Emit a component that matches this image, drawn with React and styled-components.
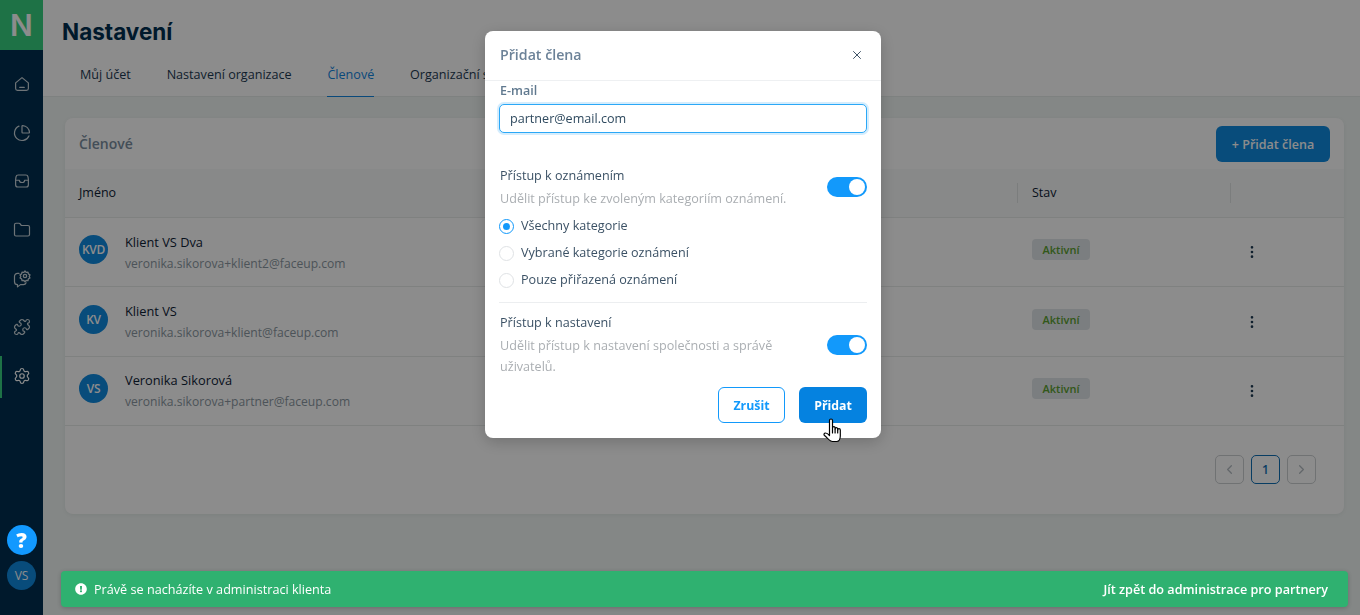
import styled, { createGlobalStyle } from "styled-components";
import { ChartPie, Folder, Puzzle, Settings, X, ChevronLeft, ChevronRight, EllipsisVertical } from "lucide-react";
import { FaExclamationCircle } from "react-icons/fa";

const GlobalStyle = createGlobalStyle`
  html, body { margin: 0; height: 100%; overflow: hidden; }
  body { font-family: "Open Sans", "Liberation Sans", sans-serif; background: #f0f6f4; color: #1d3a52; }
  * { box-sizing: border-box; }
`;

const Layout = styled.div`
  display: flex;
  height: 100vh;
`;

// sidebar
const Sidebar = styled.nav`
  width: 43px;
  flex-shrink: 0;
  background: #002f50;
  display: flex;
  flex-direction: column;
  align-items: center;
`;

const Logo = styled.div`
  width: 100%;
  height: 50px;
  background: #37cf80;
  color: #fff;
  font-family: Inter, sans-serif;
  font-weight: 600;
  font-size: 30px;
  display: flex;
  align-items: center;
  justify-content: center;
  margin-bottom: 10px;
`;

const NavItem = styled.div`
  position: relative;
  width: 100%;
  height: 48.6px;
  display: flex;
  align-items: center;
  justify-content: center;
  color: ${(p) => (p.$active ? "#fff" : "#c9d3da")};
  svg { width: 18px; height: 18px; }
  &::before {
    content: "";
    display: ${(p) => (p.$active ? "block" : "none")};
    position: absolute;
    left: 0;
    top: 4px;
    width: 2px;
    height: 42px;
    background: #37cf80;
  }
`;

const SideBottom = styled.div`
  margin-top: auto;
  padding-bottom: 25px;
  display: flex;
  flex-direction: column;
  align-items: center;
  gap: 6px;
`;

const HelpButton = styled.div`
  position: relative;
  z-index: 20;
  width: 30px;
  height: 30px;
  border-radius: 50%;
  background: #1299ff;
  color: #fff;
  font-weight: 800;
  font-size: 21px;
  line-height: 30px;
  text-align: center;
`;

const UserBadge = styled.div`
  width: 29px;
  height: 29px;
  border-radius: 50%;
  background: #0f8ae0;
  color: #fff;
  font-size: 12px;
  line-height: 29px;
  text-align: center;
`;

// main part
const Main = styled.main`
  flex: 1;
  min-width: 0;
  display: flex;
  flex-direction: column;
`;

const Header = styled.header`
  height: 97px;
  background: #fff;
  border-bottom: 1px solid #e6ecea;
  padding: 18px 0 0 19px;
`;

const Title = styled.h1`
  margin: 0;
  font-family: Inter, sans-serif;
  font-size: 22.5px;
  line-height: 28px;
  font-weight: 700;
  color: #002f50;
`;

const Tabs = styled.div`
  display: flex;
  gap: 35.8px;
  padding: 12px 0 0 18px;
`;

const Tab = styled.div`
  height: 39px;
  font-size: 12.6px;
  line-height: 34px;
  white-space: nowrap;
  color: ${(p) => (p.$active ? "#1185e0" : "#1d3a52")};
  border-bottom: ${(p) => (p.$active ? "1px solid #1185e0" : "none")};
`;

const Content = styled.div`
  flex: 1;
  padding: 21px 16px 0 22px;
`;

const Card = styled.section`
  height: 396px;
  background: #fff;
  border-radius: 8px;
  box-shadow: 0 1px 4px rgba(0, 0, 0, 0.06);
  display: flex;
  flex-direction: column;
`;

const CardHead = styled.div`
  height: 51px;
  flex-shrink: 0;
  padding: 8px 14px 7px;
  display: flex;
  align-items: center;
  justify-content: space-between;
`;

const CardTitle = styled.h2`
  margin: 0 0 1px;
  font-size: 14px;
  font-weight: 600;
  color: #7b8ea0;
`;

const PrimaryButton = styled.button`
  height: 36px;
  width: 114px;
  border: none;
  border-radius: 6px;
  background: #0f8ae0;
  color: #fff;
  font: 600 12.5px "Open Sans", sans-serif;
`;

const TableRow = styled.div`
  display: grid;
  grid-template-columns: 952px 213px 1fr;
  align-items: center;
  flex-shrink: 0;
  height: ${(p) => (p.$head ? "49px" : "69.4px")};
  background: ${(p) => (p.$head ? "#f8f9f9" : "transparent")};
  border-bottom: 1px solid #e8ebea;
`;

const HeadCell = styled.div`
  font-size: 12.5px;
  color: #0e2236;
  padding-left: 14px;
  height: 20px;
  line-height: 20px;
  border-left: ${(p) => (p.$divider ? "1px solid #e0e4e3" : "none")};
`;

const MemberCell = styled.div`
  display: flex;
  align-items: center;
  gap: 17px;
  padding-left: 14px;
`;

const Avatar = styled.div`
  width: 29px;
  height: 29px;
  margin-bottom: 5px;
  border-radius: 50%;
  background: #0f8ae0;
  color: #fff;
  font-size: 12px;
  font-weight: 600;
  letter-spacing: -0.3px;
  line-height: 29px;
  text-align: center;
`;

const MemberText = styled.div`
  padding-top: 2px;
`;

const MemberName = styled.div`
  font-size: 12.8px;
  font-weight: 500;
  line-height: 18px;
  color: #0e2236;
`;

const MemberMail = styled.div`
  margin-top: 2px;
  font-size: 12.1px;
  line-height: 21px;
  color: #8b98a2;
`;

const StatusCell = styled.div`
  padding: 0 0 5px 15px;
`;

const StatusBadge = styled.span`
  display: block;
  width: 58px;
  height: 21px;
  border-radius: 4px;
  background: #e1e6e9;
  color: #5aa030;
  font-size: 11px;
  font-weight: 600;
  line-height: 22px;
  text-align: center;
`;

const MenuCell = styled.div`
  padding-left: 14px;
  color: #1d3a52;
  display: flex;
  svg { width: 16px; height: 16px; }
`;

const Pagination = styled.div`
  display: flex;
  justify-content: flex-end;
  gap: 7px;
  padding: 29px 28px 0 0;
`;

const PageButton = styled.div`
  width: 29px;
  height: 29px;
  border-radius: 5px;
  border: 1px solid ${(p) => (p.$active ? "#0f6fb5" : "#ccd0d2")};
  color: ${(p) => (p.$active ? "#0f6fb5" : "#b4bcc2")};
  font-size: 12px;
  font-weight: 600;
  display: flex;
  align-items: center;
  justify-content: center;
  svg { width: 15px; height: 15px; }
`;

const Banner = styled.div`
  position: relative;
  z-index: 20;
  height: 36px;
  margin: 0 12px 8px 18px;
  padding: 0 20px 1px 14px;
  background: #2fb170;
  border-radius: 4px;
  color: #fff;
  font-size: 12.65px;
  display: flex;
  align-items: center;
  justify-content: space-between;
  box-shadow: 0 1px 4px rgba(0, 0, 0, 0.2);
`;

const BannerText = styled.div`
  display: flex;
  align-items: center;
  gap: 7px;
  svg { width: 12px; height: 12px; }
`;

const BannerLink = styled.span`
  font-weight: 600;
`;

// modal
const Overlay = styled.div`
  position: fixed;
  inset: 0;
  z-index: 10;
  background: rgba(0, 0, 0, 0.45);
  display: flex;
  justify-content: center;
  align-items: flex-start;
  padding: 31px 0 0 6px;
`;

const Modal = styled.div`
  width: 396px;
  height: 407px;
  background: #fff;
  border-radius: 8px;
  box-shadow: 0 4px 16px rgba(0, 0, 0, 0.2);
  display: flex;
  flex-direction: column;
`;

const ModalHead = styled.div`
  height: 50px;
  flex-shrink: 0;
  padding: 0 17px 2px 15px;
  border-bottom: 1px solid #eef0f2;
  display: flex;
  align-items: center;
  justify-content: space-between;
  svg { width: 14px; height: 14px; color: #33475b; }
`;

const ModalTitle = styled.div`
  font-size: 14.2px;
  font-weight: 600;
  color: #6c8298;
`;

const ModalBody = styled.div`
  padding: 0 14px;
`;

const FieldLabel = styled.div`
  font-size: 12.5px;
  font-weight: 600;
  line-height: 19px;
  padding-left: 1px;
  color: #60798f;
`;

const EmailInput = styled.input`
  display: block;
  width: 100%;
  height: 29px;
  margin-top: 4px;
  padding: 0 10px 1px;
  border: 1px solid #2ba8f7;
  border-radius: 5px;
  box-shadow: 0 0 0 2px #d5edfd;
  outline: none;
  color: #2f4a5f;
  font: 400 12.6px "Open Sans", sans-serif;
`;

const ToggleRow = styled.div`
  display: flex;
  align-items: center;
  justify-content: space-between;
  margin-top: ${(p) => p.$top};
`;

const ToggleTitle = styled.div`
  font-size: 12.6px;
  line-height: 21px;
  padding-left: 1px;
  color: #3b5165;
`;

const ToggleHint = styled.div`
  font-size: 12.6px;
  line-height: 21px;
  padding-left: 1px;
  margin-top: 2px;
  width: 300px;
  color: #aaaeb2;
`;

const Switch = styled.div`
  width: 40px;
  height: 20px;
  border-radius: 10px;
  background: #1299fb;
  padding: 2px;
  display: flex;
  justify-content: flex-end;
  &::after {
    content: "";
    width: 16px;
    height: 16px;
    border-radius: 50%;
    background: #fff;
  }
`;

const RadioList = styled.div`
  display: flex;
  flex-direction: column;
  gap: 7px;
  margin-top: 7px;
  padding-bottom: 12px;
  border-bottom: 1px solid #eceef0;
`;

const RadioRow = styled.div`
  display: flex;
  align-items: center;
  gap: 7px;
  font-size: 12.6px;
  line-height: 20px;
  color: #3b5165;
`;

const RadioMark = styled.span`
  width: 15px;
  height: 15px;
  border-radius: 50%;
  border: 1px solid ${(p) => (p.$on ? "#1299fb" : "#dfe2e5")};
  display: flex;
  align-items: center;
  justify-content: center;
  &::after {
    content: "";
    width: 7px;
    height: 7px;
    border-radius: 50%;
    background: ${(p) => (p.$on ? "#1299fb" : "transparent")};
  }
`;

const ModalActions = styled.div`
  display: flex;
  justify-content: flex-end;
  gap: 14px;
  margin-top: 10px;
`;

const CancelButton = styled.button`
  width: 67px;
  height: 36px;
  border: 1px solid #1299fb;
  border-radius: 6px;
  background: #fff;
  color: #1299fb;
  font: 700 12.3px "Open Sans", sans-serif;
`;

const SubmitButton = styled.button`
  width: 68px;
  height: 36px;
  border: none;
  border-radius: 6px;
  background: #0582e0;
  color: #fff;
  font: 700 12.3px "Open Sans", sans-serif;
`;

const Cursor = styled.svg`
  position: absolute;
  left: 823px;
  top: 418px;
  width: 20px;
  height: 25px;
`;

const HomeIcon = () => (
  <svg viewBox="0 0 24 24" fill="none" stroke="currentColor" strokeWidth="1.6" strokeLinejoin="round" strokeLinecap="round">
    <path d="M3.5 10.5 12 3.5l8.5 7V18a2.5 2.5 0 0 1-2.5 2.5H6A2.5 2.5 0 0 1 3.5 18z" />
    <path d="M9 16.5h6" />
  </svg>
);

const InboxIcon = () => (
  <svg viewBox="0 0 24 24" fill="none" stroke="currentColor" strokeWidth="1.6" strokeLinejoin="round" strokeLinecap="round">
    <path d="M7 4h10a3 3 0 0 1 3 2.5l.5 3.5v7a3 3 0 0 1-3 3h-11a3 3 0 0 1-3-3v-7L4 6.500A3 3 0 0 1 7 4z" />
    <path d="M3.5 11h5a3.500 3 0 0 0 7 0h5" />
  </svg>
);

const ChatGearIcon = () => (
  <svg viewBox="0 0 24 24" fill="none" stroke="currentColor" strokeWidth="1.6" strokeLinejoin="round" strokeLinecap="round">
    <path d="M8 4.500H6A4 4 0 0 0 2 8.500v7A4 4 0 0 0 6 19.500v3l4-3h4a4 4 0 0 0 3.500-2.500" />
    <g transform="translate(16 8) scale(1.1) translate(-15.500 -8.500)">
      <circle cx="15.500" cy="8.500" r="2" />
      <path d="M15.500 2.500l1.400 1.600 2.200-.2.500 2.100 1.900 1.100-.9 1.900.9 1.900-1.900 1.100-.5 2.100-2.200-.2-1.400 1.600-1.400-1.600-2.200.2-.5-2.100-1.900-1.100.9-1.900-.9-1.900 1.900-1.100.5-2.100 2.200.2z" />
    </g>
  </svg>
);

const navItems = [HomeIcon, ChartPie, InboxIcon, Folder, ChatGearIcon, Puzzle, Settings];

const tabs = ["Můj účet", "Nastavení organizace", "Členové", "Organizační struktura"];

const members = [
  { initials: "KVD", name: "Klient VS Dva", mail: "veronika.sikorova+klient2@faceup.com" },
  { initials: "KV", name: "Klient VS", mail: "veronika.sikorova+klient@faceup.com" },
  { initials: "VS", name: "Veronika Sikorová", mail: "veronika.sikorova+partner@faceup.com" },
];

const radios = ["Všechny kategorie", "Vybrané kategorie oznámení", "Pouze přiřazená oznámení"];

export default function App() {
  return (
    <Layout>
      <GlobalStyle />
      <Sidebar>
        <Logo>N</Logo>
        {navItems.map((Icon, i) => (
          <NavItem key={i} $active={i === navItems.length - 1}>
            <Icon strokeWidth={1.6} />
          </NavItem>
        ))}
        <SideBottom>
          <HelpButton>?</HelpButton>
          <UserBadge>VS</UserBadge>
        </SideBottom>
      </Sidebar>

      <Main>
        <Header>
          <Title>Nastavení</Title>
          <Tabs>
            {tabs.map((t) => (
              <Tab key={t} $active={t === "Členové"}>{t}</Tab>
            ))}
          </Tabs>
        </Header>
        <Content>
          <Card>
            <CardHead>
              <CardTitle>Členové</CardTitle>
              <PrimaryButton>+ Přidat člena</PrimaryButton>
            </CardHead>
            <TableRow $head>
              <HeadCell>Jméno</HeadCell>
              <HeadCell $divider>Stav</HeadCell>
              <HeadCell $divider />
            </TableRow>
            {members.map((m) => (
              <TableRow key={m.initials}>
                <MemberCell>
                  <Avatar>{m.initials}</Avatar>
                  <MemberText>
                    <MemberName>{m.name}</MemberName>
                    <MemberMail>{m.mail}</MemberMail>
                  </MemberText>
                </MemberCell>
                <StatusCell>
                  <StatusBadge>Aktivní</StatusBadge>
                </StatusCell>
                <MenuCell>
                  <EllipsisVertical />
                </MenuCell>
              </TableRow>
            ))}
            <Pagination>
              <PageButton><ChevronLeft /></PageButton>
              <PageButton $active>1</PageButton>
              <PageButton><ChevronRight /></PageButton>
            </Pagination>
          </Card>
        </Content>
        <Banner>
          <BannerText>
            <FaExclamationCircle />
            Právě se nacházíte v administraci klienta
          </BannerText>
          <BannerLink>Jít zpět do administrace pro partnery</BannerLink>
        </Banner>
      </Main>

      <Overlay>
        <Modal>
          <ModalHead>
            <ModalTitle>Přidat člena</ModalTitle>
            <X strokeWidth={1.6} />
          </ModalHead>
          <ModalBody>
            <FieldLabel>E-mail</FieldLabel>
            <EmailInput defaultValue="partner@email.com" />
            <ToggleRow $top="32px">
              <div>
                <ToggleTitle>Přístup k oznámením</ToggleTitle>
                <ToggleHint>Udělit přístup ke zvoleným kategoriím oznámení.</ToggleHint>
              </div>
              <Switch />
            </ToggleRow>
            <RadioList>
              {radios.map((r, i) => (
                <RadioRow key={r}>
                  <RadioMark $on={i === 0} />
                  {r}
                </RadioRow>
              ))}
            </RadioList>
            <ToggleRow $top="9px">
              <div>
                <ToggleTitle>Přístup k nastavení</ToggleTitle>
                <ToggleHint>Udělit přístup k nastavení společnosti a správě uživatelů.</ToggleHint>
              </div>
              <Switch />
            </ToggleRow>
            <ModalActions>
              <CancelButton>Zrušit</CancelButton>
              <SubmitButton>Přidat</SubmitButton>
            </ModalActions>
          </ModalBody>
        </Modal>
        <Cursor viewBox="0 0 20 25" fill="#fff" stroke="#000" strokeWidth="1.2" strokeLinejoin="round" strokeLinecap="round">
          <path d="M6.500 2.500a1.500 1.500 0 0 1 3 0V10a1.300 1.300 0 0 1 2.600 0v1a1.300 1.300 0 0 1 2.600 0v1a1.300 1.300 0 0 1 2.600 0v6c0 3-1.500 5.500-3.500 5.500H9.500C7 23.500 5 20.500 1.500 17.500c-1-1-.5-2.500 1-2.500 1 0 2.500.8 4 2.500z" />
          <path d="M9.500 10v5M12.100 11v4M14.700 12v3" fill="none" />
        </Cursor>
      </Overlay>
    </Layout>
  );
}
